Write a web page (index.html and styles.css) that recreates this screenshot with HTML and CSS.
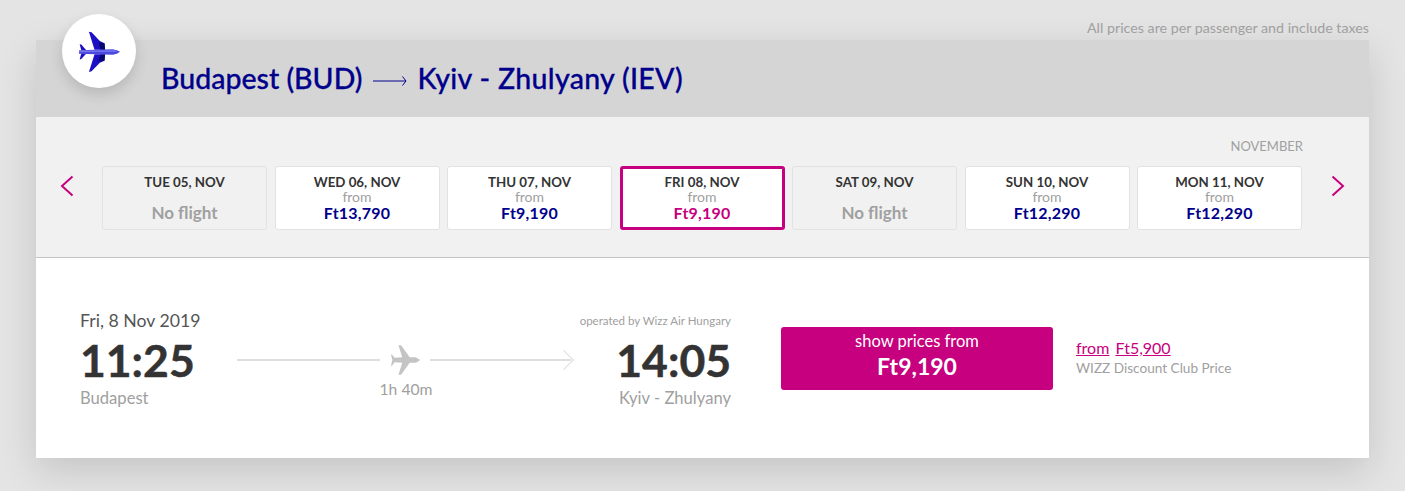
FILE: index.html
```
<!DOCTYPE html>
<html lang="en">
<head>
<meta charset="utf-8">
<title>Flight selection</title>
<link rel="stylesheet" href="styles.css">
</head>
<body>
<p class="note">All prices are per passenger and include taxes</p>
<main class="panel">
  <header class="route">
    <div class="badge">
      <svg class="badge-plane" viewBox="110 85 130 130" width="43" height="43">
        <path fill="#1c10c4" d="M143 90 L151 92 L176 118 L190 125 L192 145 L160 145 Z"/>
        <path fill="#1c10c4" d="M143 212 L151 210 L176 184 L190 178 L192 158 L160 158 Z"/>
        <path fill="#07076e" d="M172 122 L190 125 L192 145 L178 145 Z"/>
        <path fill="#07076e" d="M172 180 L190 178 L192 158 L178 158 Z"/>
        <path fill="#1c10c4" d="M115 128 L120 129 L135 146 L120 146 Z"/>
        <path fill="#1c10c4" d="M115 174 L120 173 L135 156 L120 156 Z"/>
        <path fill="#4b48e0" d="M113 146 L215 143 Q230 145 237 151 Q230 158 215 160 L113 157 Z"/>
        <path fill="#8c8af0" d="M113 148 L222 147 L228 150 L113 151 Z"/>
      </svg>
    </div>
    <h1 class="route-title">
      <span class="route-from">Budapest (BUD)</span>
      <svg class="route-arrow" viewBox="0 0 34 12" width="34" height="12"><path fill="none" stroke="#00008b" d="M0 6 H33 M29.500 1.500 L33 6 L29.500 10.500"/></svg>
      <span class="route-to">Kyiv - Zhulyany (IEV)</span>
    </h1>
  </header>
  <section class="dates">
    <div class="month">NOVEMBER</div>
    <div class="date-row">
      <button class="nav" aria-label="Previous"><svg viewBox="0 0 14 22" width="14" height="22"><path fill="none" stroke="#c6007e" stroke-width="2" d="M12.500 1.500 L2 11 L12.500 20.500"/></svg></button>
      <div class="cards">
        <div class="card empty"><div class="day">TUE 05, NOV</div><div class="none">No flight</div></div>
        <div class="card"><div class="day">WED 06, NOV</div><div class="from">from</div><div class="price">Ft13,790</div></div>
        <div class="card"><div class="day">THU 07, NOV</div><div class="from">from</div><div class="price">Ft9,190</div></div>
        <div class="card selected"><div class="day">FRI 08, NOV</div><div class="from">from</div><div class="price">Ft9,190</div></div>
        <div class="card empty"><div class="day">SAT 09, NOV</div><div class="none">No flight</div></div>
        <div class="card"><div class="day">SUN 10, NOV</div><div class="from">from</div><div class="price">Ft12,290</div></div>
        <div class="card"><div class="day">MON 11, NOV</div><div class="from">from</div><div class="price">Ft12,290</div></div>
      </div>
      <button class="nav" aria-label="Next"><svg viewBox="0 0 14 22" width="14" height="22"><path fill="none" stroke="#c6007e" stroke-width="2" d="M1.500 1.500 L12 11 L1.500 20.500"/></svg></button>
    </div>
  </section>
  <section class="flight">
    <div class="depart">
      <div class="flight-date">Fri, 8 Nov 2019</div>
      <div class="time">11:25</div>
      <div class="place">Budapest</div>
    </div>
    <div class="path">
      <div class="path-line">
        <span class="line line-start"></span>
        <svg class="path-plane" viewBox="0 0 32 32" width="30" height="32"><path fill="#c4c4c4" d="M9 0 L12 0.500 L21 13 L27 13 Q30 14 32 16 Q30 18 27 19 L21 19 L12 31.500 L9 32 L13 19 L5 18.500 L2 22 L1 22 L2.500 16 L1 10 L2 10 L5 13.500 L13 13 Z"/></svg>
        <span class="line line-end"></span>
      </div>
      <div class="duration">1h 40m</div>
    </div>
    <div class="arrive">
      <div class="operator">operated by Wizz Air Hungary</div>
      <div class="time">14:05</div>
      <div class="place">Kyiv - Zhulyany</div>
    </div>
    <button class="cta"><span class="cta-label">show prices from</span><span class="cta-price">Ft9,190</span></button>
    <div class="club">
      <div class="club-price"><a href="#">from</a> <a href="#">Ft5,900</a></div>
      <div class="club-label">WIZZ Discount Club Price</div>
    </div>
  </section>
</main>
</body>
</html>
```
FILE: styles.css
```
* { box-sizing: border-box; }
html, body { height: 100%; }
body {
  margin: 0;
  padding: 0 36px;
  background: #e4e4e4;
  font-family: "Lato", "Open Sans", sans-serif;
  color: #333;
  overflow: hidden;
}
.note {
  margin: 0;
  height: 40px;
  padding-top: 19px;
  text-align: right;
  font-size: 14.250px;
  line-height: 18px;
  color: #a0a0a0;
}
.panel {
  background: #fff;
  box-shadow: 0 12px 36px rgba(0, 0, 0, 0.14);
}
.route {
  position: relative;
  height: 77px;
  background: #d5d5d5;
  padding: 20px 0 0 125px;
}
.badge {
  position: absolute;
  left: 26px;
  top: -26px;
  width: 74px;
  height: 74px;
  border-radius: 50%;
  background: #fff;
  box-shadow: 0 6px 14px rgba(0, 0, 0, 0.14);
  display: flex;
  align-items: center;
  justify-content: center;
}
.route-title {
  margin: 0;
  display: flex;
  align-items: center;
  gap: 10.500px;
  font-family: "Lato", sans-serif;
  font-weight: 500;
  font-size: 28.500px;
  line-height: 36px;
  -webkit-text-stroke: 0.300px #00008b;
  color: #00008b;
}
.route-from { letter-spacing: 0; }
.route-to { letter-spacing: 0.300px; }
.route-arrow { margin-top: 6px; }
.dates {
  height: 141px;
  background: #f1f1f1;
  border-bottom: 1px solid #c4c4c4;
  padding-top: 20px;
}
.month {
  height: 29px;
  padding-right: 66px;
  text-align: right;
  font-size: 13px;
  line-height: 18px;
  color: #a0a0a0;
}
.date-row {
  display: flex;
  align-items: flex-start;
  padding: 0 24px;
}
.nav {
  flex: none;
  width: 42px;
  height: 40px;
  padding: 0;
  border: 0;
  background: none;
  display: flex;
  align-items: center;
}
.nav:last-child { flex: 1; justify-content: flex-end; }
.cards {
  flex: none;
  display: grid;
  grid-template-columns: repeat(7, 165px);
  gap: 7.500px;
}
.card {
  height: 64px;
  background: #fff;
  border: 1px solid #e2e2e2;
  border-radius: 3px;
  padding-top: 7px;
  text-align: center;
}
.card.empty { background: #f1f1f1; }
.card.selected { border: 3px solid #c6007e; padding-top: 5px; }
.day {
  font-size: 13.300px;
  line-height: 16px;
  font-weight: 700;
  color: #333;
}
.from {
  font-size: 14px;
  line-height: 13px;
  color: #a0a0a0;
}
.price {
  font-size: 16px;
  line-height: 20px;
  font-weight: 700;
  letter-spacing: 0.200px;
  color: #00008b;
}
.selected .price { color: #c6007e; }
.none {
  margin-top: 12px;
  font-size: 17px;
  line-height: 22px;
  font-weight: 700;
  color: #a0a0a0;
}
.flight {
  height: 200px;
  display: flex;
  align-items: flex-start;
  padding: 51px 0 0 44px;
}
.depart { width: 157px; }
.flight-date {
  font-size: 17.700px;
  line-height: 24px;
  color: #555;
}
.time {
  margin-top: 2px;
  font-size: 44.500px;
  line-height: 50px;
  font-weight: 700;
  color: #333;
  -webkit-text-stroke: 0.500px #333;
}
.place {
  margin-top: 2px;
  font-size: 16.600px;
  line-height: 22px;
  color: #a0a0a0;
}
.path { width: 338px; padding-top: 35px; }
.path-line {
  display: flex;
  align-items: center;
  gap: 10px;
}
.line {
  display: block;
  flex: 1;
  height: 2px;
  background: #dedede;
}
.line-start { flex: none; width: 143px; }
.line-end { position: relative; margin-right: 4px; }
.line-end::after {
  content: "";
  position: absolute;
  right: 0;
  top: -6px;
  width: 13px;
  height: 13px;
  border-top: 1px solid #dedede;
  border-right: 1px solid #dedede;
  transform: rotate(45deg);
}
.duration {
  margin-top: 2px;
  text-align: center;
  font-size: 15.700px;
  line-height: 22px;
  color: #a0a0a0;
}
.arrive { width: 156px; text-align: right; }
.operator {
  font-size: 11.500px;
  line-height: 24px;
  white-space: nowrap;
  color: #a0a0a0;
}
.cta {
  flex: none;
  width: 272px;
  height: 63px;
  margin: 18px 0 0 50px;
  padding: 0 0 8px;
  border: 0;
  border-radius: 3px;
  background: #c6007e;
  color: #fff;
  font-family: inherit;
  display: flex;
  flex-direction: column;
  align-items: center;
  justify-content: center;
}
.cta-label {
  font-size: 16.500px;
  line-height: 24px;
}
.cta-price {
  font-size: 23px;
  line-height: 27px;
  font-weight: 700;
}
.club { margin: 28px 0 0 23px; }
.club-price {
  font-size: 16px;
  line-height: 22px;
}
.club-price a { color: #c6007e; margin-right: 2px; }
.club-label {
  font-size: 13.600px;
  line-height: 19px;
  color: #a0a0a0;
}
```
